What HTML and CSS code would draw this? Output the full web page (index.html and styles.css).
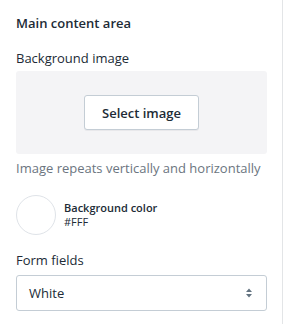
FILE: index.html
```html
<!DOCTYPE html>
<html>
<head>
<meta charset="utf-8">
<link rel="stylesheet" href="styles.css">
</head>
<body>
<div class="panel">
  <h2 class="heading">Main content area</h2>
  <div class="label">Background image</div>
  <div class="image-box">
    <button class="btn">Select image</button>
  </div>
  <p class="help">Image repeats vertically and horizontally</p>
  <div class="color-row">
    <span class="swatch"></span>
    <div class="color-text">
      <div class="color-name">Background color</div>
      <div class="color-value">#FFF</div>
    </div>
  </div>
  <div class="label">Form fields</div>
  <div class="select">
    <span>White</span>
    <svg class="arrows" width="6" height="10" viewBox="0 0 6 10"><path d="M3 0.5 L6 4 H0 Z M3 9.5 L0 6 H6 Z" fill="#637381"/></svg>
  </div>
</div>
</body>
</html>
```
FILE: styles.css
```css
* { box-sizing: border-box; }
html, body { margin: 0; padding: 0; background: #fff; }
body { font-family: "Open Sans", "Noto Sans", sans-serif; color: #212b36; }
.panel {
  width: 283px;
  height: 324px;
  border-right: 1px solid #e3e5e7;
  padding: 13px 15px 0 16px;
  display: flex;
  flex-direction: column;
}
.heading {
  margin: 0;
  font-size: 13px;
  font-weight: 600;
  line-height: 20px;
}
.label {
  margin-top: 15px;
  font-size: 13px;
  line-height: 20px;
}
.image-box {
  margin-top: 3px;
  height: 83px;
  background: #f4f4f6;
  border-radius: 3px;
  display: flex;
  align-items: center;
  justify-content: center;
}
.btn {
  font-family: inherit;
  width: 115px;
  height: 35px;
  background: #fff;
  border: 1px solid #c4cdd5;
  border-radius: 3px;
  font-size: 13px;
  font-weight: 600;
  color: #212b36;
  box-shadow: 0 1px 0 rgba(22,29,37,0.05);
  padding: 0;
}
.help {
  margin: 4px 0 0 0;
  font-size: 13px;
  line-height: 20px;
  color: #6b7580;
}
.color-row {
  margin-top: 17px;
  display: flex;
  align-items: center;
  gap: 8px;
}
.swatch {
  width: 40px;
  height: 40px;
  border-radius: 50%;
  border: 1px solid #dfe3e8;
  background: #fff;
}
.color-name { font-size: 11px; font-weight: 600; line-height: 14px; }
.color-value { font-size: 11px; line-height: 14px; }
.select {
  margin-top: 5px;
  height: 36px;
  border: 1px solid #c4cdd5;
  border-radius: 3px;
  display: flex;
  align-items: center;
  justify-content: space-between;
  padding: 0 14px 0 12px;
  font-size: 13px;
}
.arrows { display: block; }
```
